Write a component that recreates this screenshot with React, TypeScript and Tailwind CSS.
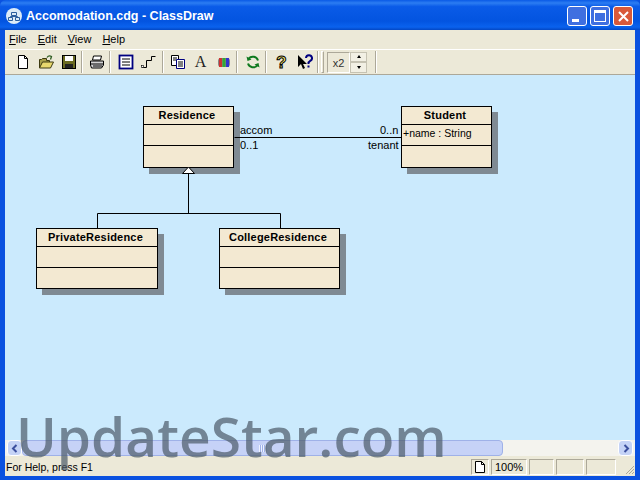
import type { ReactNode } from "react";

const uiFont = "font-['Liberation_Sans',Arial,sans-serif]";

// UML class box on the canvas
const ClassBox = ({
  name,
  attr,
  className,
}: {
  name: string;
  attr?: string;
  className: string;
}) => (
  <div
    className={`absolute flex flex-col border border-black bg-[#f3e9d2] shadow-[6px_6px_0_#7f8a93] ${className}`}
  >
    <div className="h-[18px] border-b border-black pr-[3px] text-center text-[11px] leading-[16px] font-bold tracking-[0.2px] text-black">
      {name}
    </div>
    <div className="h-[21px] border-b border-black pl-px text-[10.5px] leading-[17px] text-black">
      {attr}
    </div>
    <div className="flex-1" />
  </div>
);

// toolbar separators are not all the same distance apart in the original
const Sep = ({ className = "mr-[2px]" }: { className?: string }) => (
  <div className={`ml-px h-[22px] w-[2px] border-x border-r-white border-l-[#aca899] ${className}`} />
);

const ToolBtn = ({ children, className = "w-[23px]" }: { children: ReactNode; className?: string }) => (
  <div className={`flex h-[22px] items-center justify-center ${className}`}>{children}</div>
);

const Icon = ({ children }: { children: ReactNode }) => (
  <svg width="16" height="16" viewBox="0 0 16 16" fill="none">
    {children}
  </svg>
);

const Toolbar = () => (
  <div className="flex h-[25px] items-center border-t border-white bg-[#ece9d8] pl-[6px]">
    <ToolBtn>
      <Icon>
        <path d="M3.500 1.500h6l3 3v10h-9z" fill="#fff" stroke="#000" />
        <path d="M9.500 1.500v3h3" stroke="#000" />
      </Icon>
    </ToolBtn>
    <ToolBtn>
      <Icon>
        <path d="M1.500 14V5.500h2l1-1h4v2h3v2" fill="#a8a04a" stroke="#3c3a10" />
        <path d="M1.500 14l3-6h11l-3 6z" fill="#e8d86e" stroke="#3c3a10" />
        <path d="M9 3.500C10 2 12 1.500 13.500 2.500l-1 3" stroke="#2e5d22" strokeWidth="1.300" />
      </Icon>
    </ToolBtn>
    <ToolBtn>
      <Icon>
        <rect x="1.500" y="1.500" width="13" height="13" fill="#6b6b22" stroke="#000" />
        <rect x="4" y="2" width="8" height="5" fill="#fff" />
        <rect x="4" y="10" width="8" height="4" fill="#222" />
      </Icon>
    </ToolBtn>
    <Sep />
    <ToolBtn>
      <Icon>
        <path d="M4.500 2h8l-1 4h-8z" fill="#fff" stroke="#000" />
        <path d="M1.500 7h13v4l-2 3h-10l-1-3z" fill="#d5d5d5" stroke="#000" />
        <path d="M2 10h12M4 12h9" stroke="#000" />
      </Icon>
    </ToolBtn>
    <Sep className="mr-[3px]" />
    <ToolBtn>
      <Icon>
        <rect x="1.500" y="1.500" width="13" height="13" fill="#fff" stroke="#000080" strokeWidth="1.800" />
        <path d="M4 5h8M4 8h8M4 11h8" stroke="#000" />
      </Icon>
    </ToolBtn>
    <ToolBtn className="w-[24px]">
      <Icon>
        <path d="M1 13.500h4.500v-7h5v-4h4" stroke="#000" />
        <rect x="0.500" y="11.500" width="2" height="2" fill="#fff" stroke="#000" strokeWidth="0.600" />
      </Icon>
    </ToolBtn>
    <Sep />
    <ToolBtn>
      <Icon>
        <path d="M1.500 1.500h7v10h-7z" fill="#fff" stroke="#000" />
        <path d="M6.500 5.500h8v9h-8z" fill="#fff" stroke="#000080" />
        <path d="M8 8h5M8 10h5M8 12h5M3 4h4M3 6h3" stroke="#000" />
      </Icon>
    </ToolBtn>
    <ToolBtn>
      <span className="font-['Liberation_Serif',serif] text-[16px] leading-none text-[#222]">A</span>
    </ToolBtn>
    <ToolBtn>
      <Icon>
        <rect x="2" y="4" width="12" height="9" rx="3" fill="#888" />
        <rect x="3" y="4" width="3" height="9" fill="#c33" />
        <rect x="6.500" y="4" width="3" height="9" fill="#3a3" />
        <rect x="10" y="4" width="3" height="9" fill="#33c" />
      </Icon>
    </ToolBtn>
    <Sep className="mr-[3px]" />
    <ToolBtn>
      <Icon>
        <path d="M13 6.500A5.500 5.500 0 0 0 3.600 4.600M3 9.500a5.500 5.500 0 0 0 9.400 1.900" stroke="#0f7a1f" strokeWidth="2" />
        <path d="M1.500 2.500l1 4.500 4-1.500zM14.500 13.500l-1-4.500-4 1.500z" fill="#0f7a1f" />
      </Icon>
    </ToolBtn>
    <Sep className="mr-[3px]" />
    <ToolBtn>
      <span className="text-[17px] leading-none font-bold text-[#f2e36a] [-webkit-text-stroke:1px_#000]">?</span>
    </ToolBtn>
    <ToolBtn>
      <Icon>
        <path d="M1 1v12l3-3 2 5 2-1-2-4h4z" fill="#000" />
        <path d="M9 4a3 3 0 1 1 4 3l-1.500 1.500V10M11.500 11.500v2" stroke="#000080" strokeWidth="2" />
      </Icon>
    </ToolBtn>
    <Sep />
    <div className="mr-[3px] h-[22px] w-[3px] border border-t-white border-r-[#aca899] border-b-[#aca899] border-l-white" />
    <div className="h-[21px] w-[23px] border border-t-[#aca899] border-r-white border-b-white border-l-[#aca899] text-center text-[11px] leading-[20px] text-[#333]">
      x2
    </div>
    <div className="flex h-[21px] w-[17px] flex-col">
      <div className="flex flex-1 items-center justify-center border border-[#c5c2b2] bg-[#f2f0e4]">
        <div className="h-0 w-0 border-x-[2.500px] border-b-[3px] border-x-transparent border-b-black" />
      </div>
      <div className="flex flex-1 items-center justify-center border border-[#c5c2b2] bg-[#f2f0e4]">
        <div className="h-0 w-0 border-x-[2.500px] border-t-[3px] border-x-transparent border-t-black" />
      </div>
    </div>
    <div className="ml-[8px] h-[22px] w-[2px] border-x border-r-white border-l-[#aca899]" />
  </div>
);

const Canvas = () => (
  <div className="relative flex-1 border-t border-[#aca899] bg-[#cbeafd]">
    <ClassBox name="Residence" className="top-[31px] left-[138px] h-[62px] w-[91px]" />
    <ClassBox name="Student" attr="+name : String" className="top-[31px] left-[396px] h-[62px] w-[91px]" />
    <ClassBox name="PrivateResidence" className="top-[153px] left-[31px] h-[61px] w-[122px]" />
    <ClassBox name="CollegeResidence" className="top-[153px] left-[214px] h-[61px] w-[121px]" />

    <svg className="absolute top-0 left-0" width="630" height="240" fill="none">
      <path d="M229.500 62.500H396" stroke="#000" />
      <path d="M183.500 98v40.500M92.500 153v-14.500h183V153" stroke="#000" />
      <path d="M183.500 92l6 6.500h-12z" fill="#fff" stroke="#000" />
    </svg>

    <span className="absolute top-[49px] left-[235px] text-[11px] leading-[13px] text-black">accom</span>
    <span className="absolute top-[64px] left-[235px] text-[11px] leading-[13px] text-black">0..1</span>
    <span className="absolute top-[49px] left-[375px] text-[11px] leading-[13px] text-black">0..n</span>
    <span className="absolute top-[64px] left-[363px] text-[11px] leading-[13px] text-black">tenant</span>
  </div>
);

const ScrollBar = () => (
  <div className="flex h-[16px] items-stretch bg-[#f4f3ee] pr-[2px] pl-[2px]">
    <div className="flex w-[15px] items-center justify-center rounded-sm border border-white bg-[#c5d3f6]">
      <svg width="8" height="9" viewBox="0 0 8 9" fill="none">
        <path d="M5.500 1L2 4.500 5.500 8" stroke="#3b4f9e" strokeWidth="2" />
      </svg>
    </div>
    <div className="flex w-[481px] items-center justify-center rounded-sm border border-[#9fb1e8] bg-[#c6d2f7]">
      <div className="h-[7px] w-[8px] bg-[repeating-linear-gradient(90deg,#eef2ff_0_1px,#9fb1e8_1px_2px)]" />
    </div>
    <div className="flex-1" />
    <div className="flex w-[15px] items-center justify-center rounded-sm border border-white bg-[#c5d3f6]">
      <svg width="8" height="9" viewBox="0 0 8 9" fill="none">
        <path d="M2.500 1L6 4.500 2.500 8" stroke="#3b4f9e" strokeWidth="2" />
      </svg>
    </div>
  </div>
);

const StatusPane = ({ children, className }: { children?: ReactNode; className: string }) => (
  <div
    className={`flex h-[16px] items-center justify-center border border-t-[#aca899] border-r-white border-b-white border-l-[#aca899] ${className}`}
  >
    {children}
  </div>
);

const StatusBar = () => (
  <div className="flex h-[20px] items-end gap-[2px] bg-[#ece9d8] pb-px pl-px text-[11px] leading-[16px] text-black">
    <div className="flex-1 text-[10.500px]">For Help, press F1</div>
    <StatusPane className="w-[18px]">
      <svg width="10" height="12" viewBox="0 0 10 12" fill="none">
        <path d="M0.500 0.500h6l3 3v8h-9z" fill="#fff" stroke="#000" />
        <path d="M6.500 0.500v3h3" stroke="#000" />
      </svg>
    </StatusPane>
    <StatusPane className="w-[36px]">100%</StatusPane>
    <StatusPane className="w-[25px]" />
    <StatusPane className="w-[28px]" />
    <StatusPane className="w-[30px]" />
    <div className="flex h-[16px] w-[17px] items-end justify-end">
      <svg width="12" height="12" viewBox="0 0 12 12" fill="none">
        <path d="M11 3l-8 8M11 6l-5 5M11 9l-2 2" stroke="#aca899" />
      </svg>
    </div>
  </div>
);

const App = () => (
  <div className={`relative flex h-[480px] w-[640px] flex-col overflow-hidden bg-[#0a51e0] ${uiFont}`}>
    {/* title bar */}
    <div className="flex h-[30px] items-center rounded-t-md bg-[linear-gradient(180deg,#0a5ae6_0%,#2c7df2_10%,#0a5be8_22%,#0354e0_70%,#0a62ee_90%,#0347c4_100%)] pt-[2px] pr-[7px] pl-[6px]">
      <svg width="16" height="16" viewBox="0 0 16 16" fill="none">
        <circle cx="8" cy="8" r="8" fill="#dcecf8" />
        <path d="M5.500 4.500h5v3h-5zM2.500 9.500h4v3h-4zM9.500 9.500h4v3h-4zM8 7.500v1M4.500 9.500v-1h7v1" stroke="#2b5f9e" />
      </svg>
      <span className="ml-[4px] text-[12.500px] font-bold text-white">Accomodation.cdg - ClassDraw</span>
      <div className="ml-auto flex gap-[3px]">
        <div className="relative h-[20px] w-[20px] rounded-[3px] border border-white bg-[#3f6fe0]">
          <div className="absolute bottom-[3px] left-[4px] h-[3px] w-[7px] bg-white" />
        </div>
        <div className="h-[20px] w-[20px] rounded-[3px] border border-white bg-[#3f6fe0] p-[3px]">
          <div className="h-full w-full border border-t-[3px] border-white" />
        </div>
        <div className="flex h-[20px] w-[20px] items-center justify-center rounded-[3px] border border-white bg-[#d9593a]">
          <svg width="13" height="13" viewBox="0 0 13 13" fill="none">
            <path d="M2 2l9 9M11 2l-9 9" stroke="#fff" strokeWidth="2" />
          </svg>
        </div>
      </div>
    </div>

    <div className="mx-[5px] flex min-h-0 flex-1 flex-col">
      {/* menu */}
      <div className="flex h-[19px] items-center gap-[11px] bg-[#ece9d8] pl-[4px] text-[11px] text-black">
        <span><u>F</u>ile</span>
        <span><u>E</u>dit</span>
        <span><u>V</u>iew</span>
        <span><u>H</u>elp</span>
      </div>
      <Toolbar />
      <Canvas />
      <ScrollBar />
      <StatusBar />
    </div>
    <div className="h-[4px]" />

    {/* watermark over the window */}
    <div className="absolute top-[413px] left-[16px] font-['Open_Sans',sans-serif] text-[55px] leading-[46px] font-semibold text-[#4b5a68]/70">
      UpdateStar.com
    </div>
  </div>
);

export default App;
